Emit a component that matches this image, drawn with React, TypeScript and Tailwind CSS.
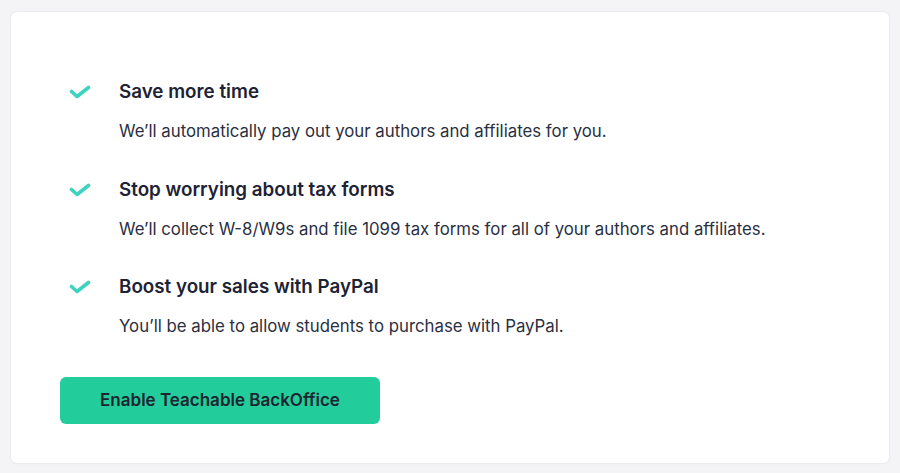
const FEATURES = [
  {
    title: "Save more time",
    body: "We’ll automatically pay out your authors and affiliates for you.",
  },
  {
    title: "Stop worrying about tax forms",
    body: "We’ll collect W-8/W9s and file 1099 tax forms for all of your authors and affiliates.",
  },
  {
    title: "Boost your sales with PayPal",
    body: "You’ll be able to allow students to purchase with PayPal.",
  },
];

function Check() {
  return (
    <svg width="22" height="14" viewBox="0 0 22 14" fill="none" className="shrink-0">
      <path
        d="M2.5 6.5 L8 11.5 L19.5 2.5"
        stroke="#3ed3bf"
        strokeWidth="3.6"
        strokeLinecap="round"
        strokeLinejoin="round"
      />
    </svg>
  );
}

export default function App() {
  return (
    <div
      className="min-h-[473px] bg-[#f4f4f7] pl-[11px] pr-[11px] pt-[12px] pb-[10px]"
      style={{ fontFamily: "Inter, 'Noto Sans', sans-serif" }}
    >
      <div className="bg-white rounded-md shadow-[0_0_0_1px_#ebebef,0_1px_2px_rgba(0,0,0,0.04)] pl-[49px] pr-8 pt-[66px] pb-[39px]">
        <div className="flex flex-col gap-[32.5px]">
          {FEATURES.map((f) => (
            <div key={f.title} className="flex">
              <div className="w-[59px] pl-[9px] h-7 flex items-center">
                <Check />
              </div>
              <div>
                <p className="text-[18.8px] leading-7 font-semibold text-[#1d2235]">{f.title}</p>
                <p className="mt-[13px] text-[16.8px] leading-6 text-[#2a2f42]">{f.body}</p>
              </div>
            </div>
          ))}
        </div>
        <button className="mt-[39px] w-[320px] h-[47px] rounded-md bg-[#22cc9b] text-[17px] font-semibold text-[#1c2430]">
          Enable Teachable BackOffice
        </button>
      </div>
    </div>
  );
}
